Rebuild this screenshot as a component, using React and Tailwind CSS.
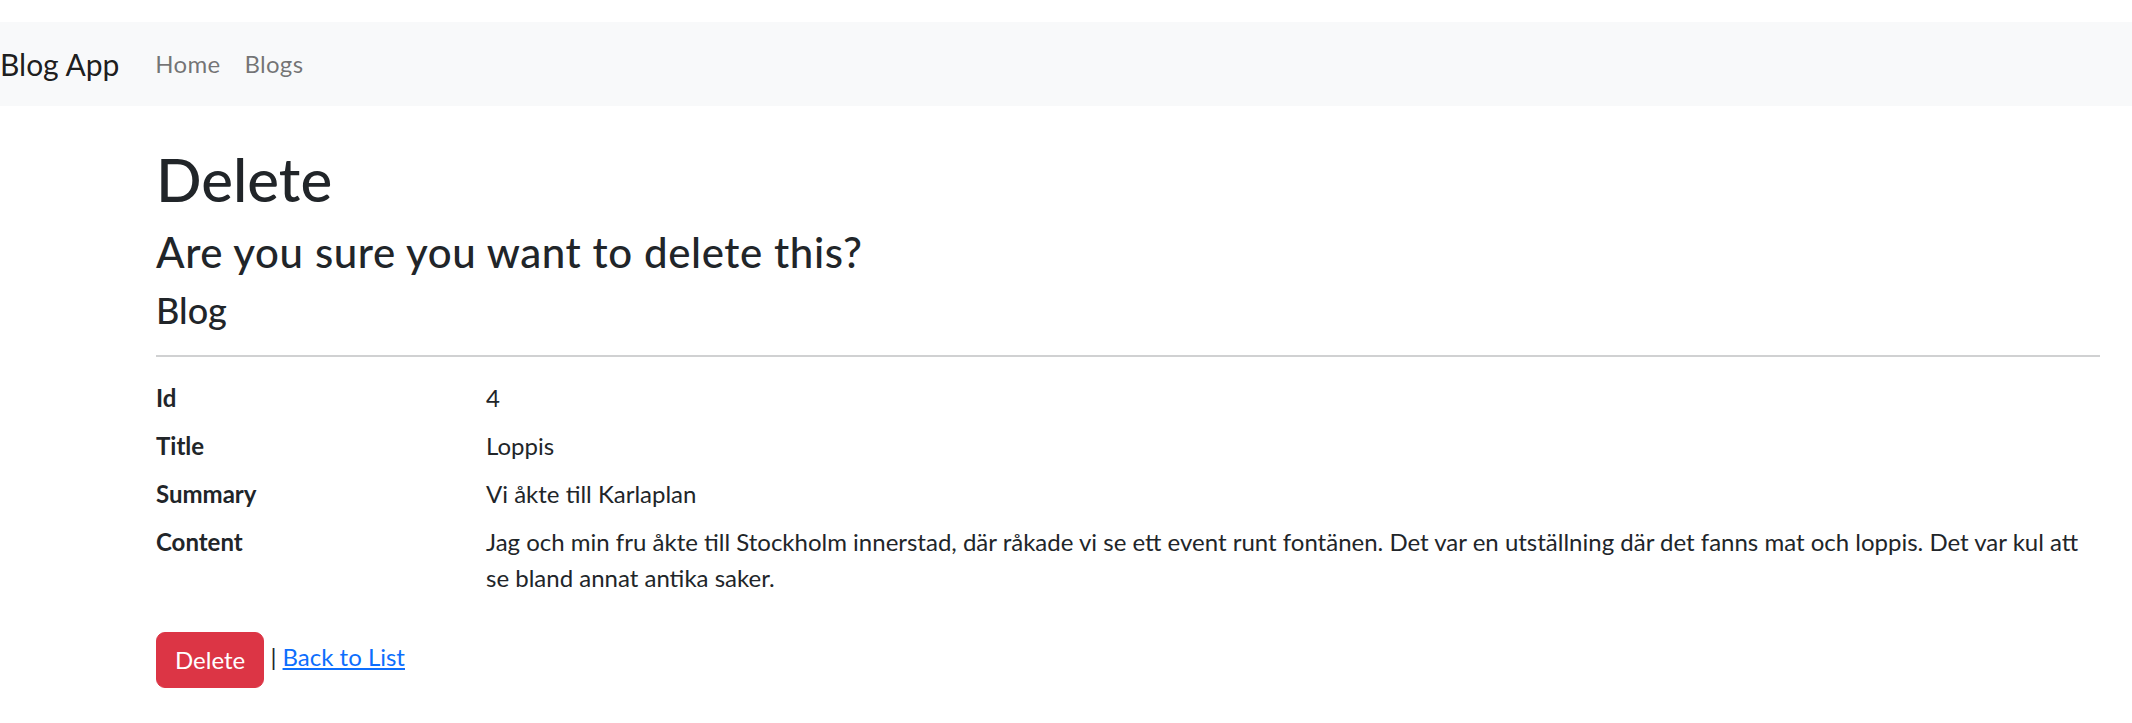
export default function App() {
  const rows = [
    { label: "Id", value: "4" },
    { label: "Title", value: "Loppis" },
    { label: "Summary", value: "Vi åkte till Karlaplan" },
    {
      label: "Content",
      value:
        "Jag och min fru åkte till Stockholm innerstad, där råkade vi se ett event runt fontänen. Det var en utställning där det fanns mat och loppis. Det var kul att se bland annat antika saker.",
    },
  ];

  return (
    <div className="min-h-screen bg-white text-[#212529] font-['Segoe_UI',Lato,'Liberation_Sans',sans-serif] pt-[22px]">
      {/* Navbar */}
      <nav className="h-[84px] bg-[#f8f9fa] flex items-center">
        <a className="text-[30px] leading-[45px] text-black/90 mr-[24px]">Blog App</a>
        <ul className="flex">
          <li>
            <a className="block px-[12px] text-[24px] leading-[36px] text-black/55 tracking-[0.3px]">Home</a>
          </li>
          <li>
            <a className="block px-[12px] text-[24px] leading-[36px] text-black/55 tracking-[0.3px]">Blogs</a>
          </li>
        </ul>
      </nav>

      {/* Main */}
      <main className="ml-[156px] mr-[32px] pt-[37px] pb-[24px]">
        <h1 className="text-[60px] leading-[72px] font-medium mb-[12px]">Delete</h1>
        <h3 className="text-[42px] leading-[50px] font-medium tracking-[0.6px] mb-[12px]">
          Are you sure you want to delete this?
        </h3>
        <div>
          <h4 className="text-[36px] leading-[43px] font-medium mb-[12px]">Blog</h4>
          <hr className="border-0 h-[2px] bg-[#d0d1d2] my-[23px]" />
          <dl className="grid grid-cols-[330px_1fr] gap-y-[12px] text-[24px] leading-[36px] mb-[36px]">
            {rows.map((r) => (
              <div key={r.label} className="contents">
                <dt className="font-bold">{r.label}</dt>
                <dd>{r.value}</dd>
              </div>
            ))}
          </dl>
          <form className="text-[24px] leading-[36px]" onSubmit={(e) => e.preventDefault()}>
            <button
              type="submit"
              className="bg-[#dc3545] text-white px-[18px] py-[9px] rounded-[9px] border-[1.5px] border-[#dc3545] align-middle"
            >
              Delete
            </button>{" "}
            | <a href="#" className="text-[#0d6efd] underline">Back to List</a>
          </form>
        </div>
      </main>
    </div>
  );
}
